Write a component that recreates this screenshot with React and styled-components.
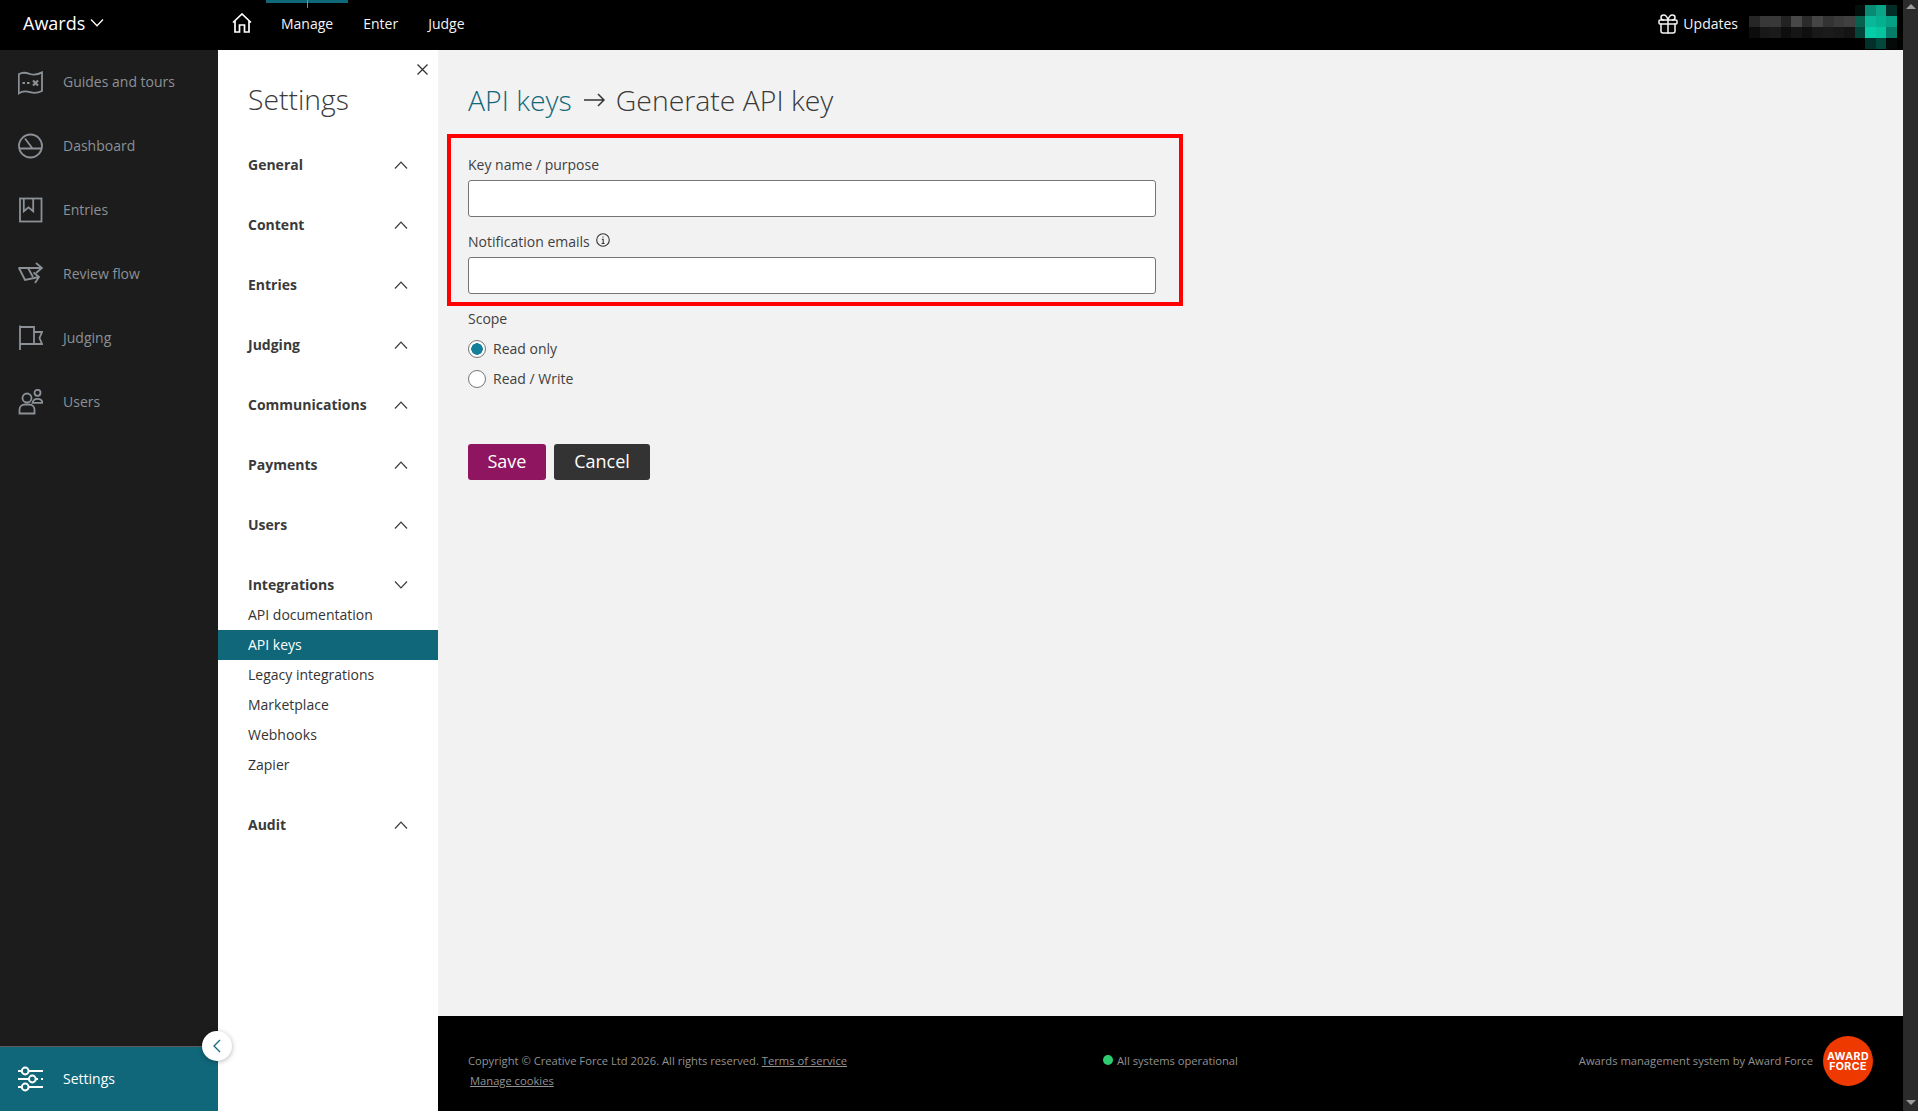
import React from "react";
import styled, { createGlobalStyle } from "styled-components";
import { Gift } from "lucide-react";

const Global = createGlobalStyle`
  html, body { margin: 0; padding: 0; height: 100%; overflow: hidden; }
  body { font-family: "Open Sans", "Liberation Sans", sans-serif; font-size: 14px; color: #3a3a3a; }
  #root { height: 100%; }
  * { box-sizing: border-box; }
`;

const Frame = styled.div`display: flex; width: 100%; height: 1111px;`;
const Page = styled.div`flex: 1; min-width: 0; display: flex; flex-direction: column;`;
const ScrollTrack = styled.div`
  width: 15px; background: #2b2b2b; display: flex; flex-direction: column;
  justify-content: space-between; align-items: center; padding: 4px 0 6px;
`;
const ScrollArrow = styled.div`
  width: 0; height: 0; border-left: 5px solid transparent; border-right: 5px solid transparent;
  ${p => p.$down ? "border-top: 5px solid #9a9a9a;" : "border-bottom: 5px solid #9a9a9a;"}
`;

const TopBar = styled.header`
  height: 50px; flex: none; background: #000; color: #fff; display: flex; align-items: center;
`;
const Brand = styled.div`
  width: 218px; padding: 0 0 4px 23px; display: flex; align-items: center; gap: 5px;
  font-size: 18px; line-height: 24px;
`;
const HomeLink = styled.a`margin: 0 14px 4px 14px; width: 20px; height: 20px; display: flex; color: #fff;`;
const NavTab = styled.a`
  position: relative; height: 50px; padding: 0 15px 3px; display: flex; align-items: center; font-size: 14px; color: #f4f4f4;
  ${p => p.$active && `
    &::before { content: ""; position: absolute; left: 0; right: 0; top: 0; height: 3px; background: #10687b; }
    &::after { content: ""; position: absolute; left: 50%; top: 0; width: 1px; height: 8px; background: #7d8b90; }
  `}
`;
const TopRight = styled.div`margin-left: auto; display: flex; align-items: center; height: 50px;`;
const Updates = styled.a`
  display: flex; align-items: center; gap: 3px; font-size: 14px; color: #f4f4f4; margin: 0 11px 3px 0;
`;
const Avatar = styled.svg`display: block; width: 148px; height: 50px; margin-right: 6px;`;

const Body = styled.div`flex: 1; min-height: 0; display: flex;`;
const Sidebar = styled.nav`
  position: relative; z-index: 2; width: 218px; flex: none; background: #1c1c1c; display: flex; flex-direction: column;
`;
const SideList = styled.div`flex: 1; display: flex; flex-direction: column;`;
const SideItem = styled.a`
  height: 64px; padding-left: 18px; display: flex; align-items: center; gap: 20px;
  color: #8b9197; font-size: 14px; flex: none;
  svg { flex: none; width: 25px; height: 26px; }
`;
const SideLabel = styled.span`margin-bottom: 2px;`;
const SideFoot = styled.a`
  position: relative; height: 65px; background: #10677a; border-top: 1px solid #5c5c5c; padding-left: 18px;
  display: flex; align-items: center; gap: 19px; color: #fff; font-size: 14px;
  svg { flex: none; }
`;
const Collapse = styled.button`
  position: absolute; right: -14px; top: -16px; width: 30px; height: 30px; border-radius: 50%; border: 0; padding: 0;
  background: #fff; box-shadow: 0 1px 5px rgba(0,0,0,.3); display: flex; align-items: center; justify-content: center;
`;

const Panel = styled.aside`
  position: relative; width: 220px; flex: none; background: #fff;
`;
const Close = styled.button`
  position: absolute; top: 14px; right: 10px; width: 11px; height: 11px; padding: 0; border: 0; background: none; display: flex;
`;
const PanelTitle = styled.h2`
  margin: 29px 0 31px; padding-left: 30px; font-size: 28.3px; line-height: 40px; font-weight: 300; color: #3a3a3a;
`;
const Section = styled.div`margin-bottom: 30px;`;
const SectionHead = styled.div`
  height: 30px; padding: 0 30px; display: flex; align-items: center; justify-content: space-between;
  font-weight: 700; font-size: 14px; color: #3a3a3a;
`;
const SectionName = styled.span`margin-bottom: 2px;`;
const SubItem = styled.a`
  display: flex; align-items: center; height: 30px; padding: 0 0 2px 30px; font-size: 14px;
  color: ${p => (p.$active ? "#fff" : "#333")}; background: ${p => (p.$active ? "#10677a" : "transparent")};
`;

const Main = styled.main`flex: 1; min-width: 0; display: flex; flex-direction: column; background: #f2f2f2;`;
const Content = styled.div`flex: 1; padding: 30px 0 0 30px;`;
const Crumbs = styled.h1`
  margin: 0 0 14px; height: 40px; display: flex; align-items: center; font-size: 28.4px; line-height: 38px; font-weight: 300; color: #3a3a3a;
  svg { margin: 0 11px 0 12px; }
`;
const CrumbLink = styled.a`color: #10687b;`;
const Highlight = styled.div`
  margin-left: -21px; width: 736px; height: 172px; border: 4px solid #ff0000; padding: 17px 0 0 17px;
`;
const FieldLabel = styled.label`
  display: flex; align-items: center; gap: 6px; height: 20px; padding-bottom: 2px; font-size: 14px; color: #3f3f3f;
`;
const InfoMark = styled.svg`width: 14px; height: 14px; margin-top: -3px;`;
const TextInput = styled.input`
  display: block; width: 688px; height: 37px; margin: 5px 0 15px; background: #fff;
  border: 1px solid #757575; border-radius: 3px; padding: 0 10px; font: inherit;
`;
const ScopeBlock = styled.div`margin-top: 3px;`;
const ScopeOptions = styled.div`margin-top: 5px;`;
const ScopeRow = styled.label`
  display: flex; align-items: center; gap: 7px; height: 30px; font-size: 14px; color: #3f3f3f;
`;
const ScopeText = styled.span`margin-bottom: 2px;`;
const Radio = styled.input`
  appearance: none; margin: 0; width: 18px; height: 18px; border-radius: 50%; background: #fff;
  border: 1px solid #757575; display: block;
  &:checked { background: radial-gradient(circle, #127f9b 0 5.5px, #fff 6px); }
`;
const Actions = styled.div`display: flex; gap: 8px; margin-top: 50px;`;
const Button = styled.button`
  height: 36px; width: ${p => p.$w}px; border: 0; border-radius: 3px; color: #fff; font: inherit; font-size: 18px; padding: 0 0 3px;
  background: ${p => p.$bg};
`;

const Footer = styled.footer`
  height: 95px; flex: none; background: #000; display: flex; padding: 20px 30px 0 30px;
  font-size: 11.2px; line-height: 20px; color: #929292;
`;
const FootLeft = styled.div`width: 635px; flex: none; margin-top: 15px;`;
const FootLink = styled.a`
  color: #929292; text-decoration: underline;
  ${p => p.$block && "display: block; margin-left: 2px;"}
`;
const Status = styled.div`flex: 1; margin-top: 15px; display: flex; align-items: center; height: 20px; gap: 4px;`;
const Dot = styled.span`width: 10px; height: 10px; border-radius: 50%; background: #2ecc71; margin-top: -3px;`;
const FootRight = styled.div`display: flex; align-items: center; gap: 10px; height: 50px;`;
const LogoMark = styled.svg`
  display: block; width: 50px; height: 50px;
  text { font-family: Inter, "Liberation Sans", sans-serif; font-weight: 700; font-size: 10.6px; letter-spacing: .4px; fill: #fff; text-anchor: middle; }
`;

const Chevron = ({ up, w = 14, h = 8, color = "#3a3a3a", sw = 1.2 }) => (
  <svg width={w} height={h} viewBox="0 0 14 8" fill="none" stroke={color} strokeWidth={sw}>
    <polyline points={up ? "1,7.5 7,1.2 13,7.5" : "1,.5 7,6.8 13,.5"} />
  </svg>
);

const stroke = { fill: "none", stroke: "currentColor", strokeWidth: 1.8 };

const MapIcon = () => (
  <svg viewBox="0 0 25 26" {...stroke}>
    <path d="M.8 5.2C5 2.8 8 3.8 12 5c4 1.2 8 .6 12-1.6V22c-4 2-8 2.4-12 1.2S4.600 21.600.8 24.400z" />
    <path d="M4.500 14h2.500M9 14h2.500" />
    <path d="M15 11.500l5 5M20 11.500l-5 5" strokeWidth="2.200" />
  </svg>
);
const DashIcon = () => (
  <svg viewBox="0 0 25 26" {...stroke}>
    <circle cx="12.500" cy="13" r="11.500" />
    <path d="M7 5.500L14.500 15.500M1.500 15.500H24" />
  </svg>
);
const EntriesIcon = () => (
  <svg viewBox="0 0 25 26" {...stroke}>
    <rect x="2" y="1.500" width="21.500" height="23" />
    <path d="M5.800 1.500V14.300L10.500 10.400L15.200 14.300V1.500" />
  </svg>
);
const FlowIcon = () => (
  <svg viewBox="0 0 25 26" {...stroke}>
    <path d="M.5 7H23.500M18 2l6 5-6 5" />
    <path d="M1 7l6 12 14-3M15.500 11.500l5.500 4.500-4 6" />
    <path d="M10 7l5 9" />
  </svg>
);
const FlagIcon = () => (
  <svg viewBox="0 0 25 26" {...stroke}>
    <path d="M2 .5V25M2 2H16V19H2" />
    <path d="M16 7H24L21.500 13L24 19H10" />
  </svg>
);
const UsersIcon = () => (
  <svg viewBox="0 0 25 26" {...stroke}>
    <circle cx="9" cy="9" r="4.500" />
    <path d="M1.500 24.500V20.500C1.500 17.500 4 15.500 7 15.500H11C14 15.500 16.500 17.500 16.500 20.500V24.500Z" />
    <circle cx="19.500" cy="3.800" r="3" />
    <path d="M14.500 13.800C15 11 17 9.800 19.500 9.800S24 11 24.500 13.800Z" />
  </svg>
);
const SlidersIcon = () => (
  <svg width="26" height="26" viewBox="0 0 26 26" fill="none" stroke="#fff" strokeWidth="2">
    <path d="M0 5h3.500M11 5h14M0 13h10.500M18 13h2M23 13h2M0 21h3.500M11 21h14" />
    <circle cx="7.200" cy="5" r="3.400" />
    <circle cx="14.300" cy="13" r="3.400" />
    <circle cx="7.200" cy="21" r="3.400" />
  </svg>
);

const rows = [
  ["#000","#000","#000","#000","#000","#000","#000","#000","#000","#000","#030f0d","#0a8a75","#0aa589","#032e27"],
  ["#262626","#383838","#383838","#222","#484848","#2b2b2b","#454545","#333","#3b3b3b","#404040","#08604f","#08b898","#05b090","#06a085"],
  ["#0c0c0c","#181818","#1a1a1a","#0e0e0e","#161616","#0f0f0f","#181818","#1b1b1b","#181818","#141414","#054438","#04cda8","#04c5a0","#057d68"],
  ["#000","#000","#000","#000","#000","#000","#000","#000","#000","#000","#000","#03302a","#04483b","#030a08"],
];

const sections = ["General", "Content", "Entries", "Judging", "Communications", "Payments", "Users"];
const subs = ["API documentation", "API keys", "Legacy integrations", "Marketplace", "Webhooks", "Zapier"];
const side = [
  ["Guides and tours", MapIcon],
  ["Dashboard", DashIcon],
  ["Entries", EntriesIcon],
  ["Review flow", FlowIcon],
  ["Judging", FlagIcon],
  ["Users", UsersIcon],
];

export default function App() {
  return (
    <Frame>
      <Global />
      <Page>
        <TopBar>
          <Brand>
            Awards
            <Chevron w={14} h={8} color="#fff" sw={1.3} />
          </Brand>
          <HomeLink>
            <svg width="20" height="20" viewBox="0 0 20 20" fill="none" stroke="#fff" strokeWidth="1.700">
              <path d="M1 9.500L10 1l9 8.500M3 7.500V19h4.500v-7h5v7H17V7.500" />
            </svg>
          </HomeLink>
          <NavTab $active>Manage</NavTab>
          <NavTab>Enter</NavTab>
          <NavTab>Judge</NavTab>
          <TopRight>
            <Updates>
              <Gift size={24} strokeWidth={1.5} />
              Updates
            </Updates>
            <Avatar viewBox="0 0 148 50" shapeRendering="crispEdges">
              {rows.map((r, y) =>
                r.map((c, x) => <rect key={x + "-" + y} x={x * 10.57} y={5 + y * 11} width="10.600" height="11" fill={c} />)
              )}
            </Avatar>
          </TopRight>
        </TopBar>
        <Body>
          <Sidebar>
            <SideList>
              {side.map(([label, Icon]) => (
                <SideItem key={label}>
                  <Icon />
                  <SideLabel>{label}</SideLabel>
                </SideItem>
              ))}
            </SideList>
            <SideFoot>
              <SlidersIcon />
              <SideLabel>Settings</SideLabel>
              <Collapse>
                <svg width="8" height="14" viewBox="0 0 8 14" fill="none" stroke="#10687b" strokeWidth="1.300">
                  <polyline points="7,1 1,7 7,13" />
                </svg>
              </Collapse>
            </SideFoot>
          </Sidebar>
          <Panel>
            <Close>
              <svg width="11" height="11" viewBox="0 0 11 11" stroke="#333" strokeWidth="1.300">
                <path d="M.5 .5l10 10M10.500 .5l-10 10" />
              </svg>
            </Close>
            <PanelTitle>Settings</PanelTitle>
            {sections.map(s => (
              <Section key={s}>
                <SectionHead>
                  <SectionName>{s}</SectionName>
                  <Chevron up />
                </SectionHead>
              </Section>
            ))}
            <Section>
              <SectionHead>
                <SectionName>Integrations</SectionName>
                <Chevron />
              </SectionHead>
              {subs.map(s => (
                <SubItem key={s} $active={s === "API keys"}>{s}</SubItem>
              ))}
            </Section>
            <Section>
              <SectionHead>
                <SectionName>Audit</SectionName>
                <Chevron up />
              </SectionHead>
            </Section>
          </Panel>
          <Main>
            <Content>
              <Crumbs>
                <CrumbLink>API keys</CrumbLink>
                <svg width="21" height="14" viewBox="0 0 21 14" fill="none" stroke="#333" strokeWidth="1.500">
                  <path d="M0 7h20M14 1l6 6-6 6" />
                </svg>
                Generate API key
              </Crumbs>
              <Highlight>
                <FieldLabel>Key name / purpose</FieldLabel>
                <TextInput />
                <FieldLabel>
                  Notification emails
                  <InfoMark viewBox="0 0 14 14" fill="none" stroke="#333" strokeWidth="1.100">
                    <circle cx="7" cy="7" r="6.300" />
                    <path d="M5.800 6.200H7.200V10.500M5.600 10.500H8.600M7 3.400V4.600" />
                  </InfoMark>
                </FieldLabel>
                <TextInput />
              </Highlight>
              <ScopeBlock>
                <FieldLabel>Scope</FieldLabel>
                <ScopeOptions>
                  <ScopeRow>
                    <Radio type="radio" name="scope" defaultChecked />
                    <ScopeText>Read only</ScopeText>
                  </ScopeRow>
                  <ScopeRow>
                    <Radio type="radio" name="scope" />
                    <ScopeText>Read / Write</ScopeText>
                  </ScopeRow>
                </ScopeOptions>
              </ScopeBlock>
              <Actions>
                <Button $bg="#8f1560" $w={78}>Save</Button>
                <Button $bg="#333333" $w={96}>Cancel</Button>
              </Actions>
            </Content>
            <Footer>
              <FootLeft>
                Copyright © Creative Force Ltd 2026. All rights reserved. <FootLink>Terms of service</FootLink>
                <FootLink $block>Manage cookies</FootLink>
              </FootLeft>
              <Status>
                <Dot />
                All systems operational
              </Status>
              <FootRight>
                Awards management system by Award Force
                <LogoMark viewBox="0 0 50 50">
                  <circle cx="25" cy="25" r="25" fill="#ee3a00" />
                  <text x="25" y="24.300">AWARD</text>
                  <text x="25" y="34.200">FORCE</text>
                </LogoMark>
              </FootRight>
            </Footer>
          </Main>
        </Body>
      </Page>
      <ScrollTrack>
        <ScrollArrow />
        <ScrollArrow $down />
      </ScrollTrack>
    </Frame>
  );
}
